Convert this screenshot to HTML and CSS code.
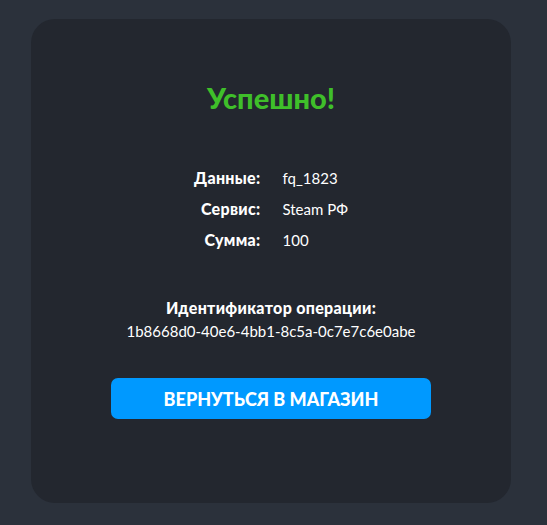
FILE: index.html
```html
<!DOCTYPE html>
<html lang="ru">
<head>
<meta charset="utf-8">
<link rel="stylesheet" href="styles.css">
</head>
<body>
<div class="page">
  <div class="card">
    <h1 class="title">Успешно!</h1>
    <div class="details">
      <div class="row"><span class="label">Данные:</span><span class="value">fq_1823</span></div>
      <div class="row"><span class="label">Сервис:</span><span class="value">Steam РФ</span></div>
      <div class="row"><span class="label">Сумма:</span><span class="value">100</span></div>
    </div>
    <div class="operation">
      <div class="op-label">Идентификатор операции:</div>
      <div class="op-id">1b8668d0-40e6-4bb1-8c5a-0c7e7c6e0abe</div>
    </div>
    <a class="button" href="#">ВЕРНУТЬСЯ В МАГАЗИН</a>
  </div>
</div>
</body>
</html>
```
FILE: styles.css
```css
html, body {
  margin: 0;
  padding: 0;
  height: 100%;
}
body {
  background: #2b313b;
  font-family: "Lato", "Noto Sans", sans-serif;
  color: #ffffff;
}
.page {
  padding: 19px 36px 22px 31px;
}
.card {
  height: 484px;
  box-sizing: border-box;
  background: #23272f;
  border-radius: 24px;
  display: flex;
  flex-direction: column;
  align-items: center;
  padding-top: 61px;
}
.title {
  margin: 0;
  font-size: 29px;
  font-weight: 900;
  color: #3fbf2a;
  line-height: 36px;
}
.details {
  margin-top: 52px;
  display: grid;
  grid-template-columns: auto auto;
  row-gap: 11px;
  column-gap: 22px;
}
.row {
  display: contents;
}
.label {
  text-align: right;
  font-weight: 900;
  font-size: 16px;
  letter-spacing: 0.3px;
  line-height: 20px;
}
.value {
  font-size: 15px;
  line-height: 20px;
}
.operation {
  margin-top: 48px;
  text-align: center;
}
.op-label {
  font-weight: 900;
  font-size: 16px;
  letter-spacing: 0.3px;
  line-height: 20px;
}
.op-id {
  font-size: 15px;
  line-height: 22px;
  margin-top: 2px;
}
.button {
  margin-top: 36px;
  width: 320px;
  height: 41px;
  border-radius: 7px;
  background: #0099ff;
  color: #ffffff;
  text-decoration: none;
  display: flex;
  align-items: center;
  justify-content: center;
  font-weight: 900;
  font-size: 18px;
}
```
